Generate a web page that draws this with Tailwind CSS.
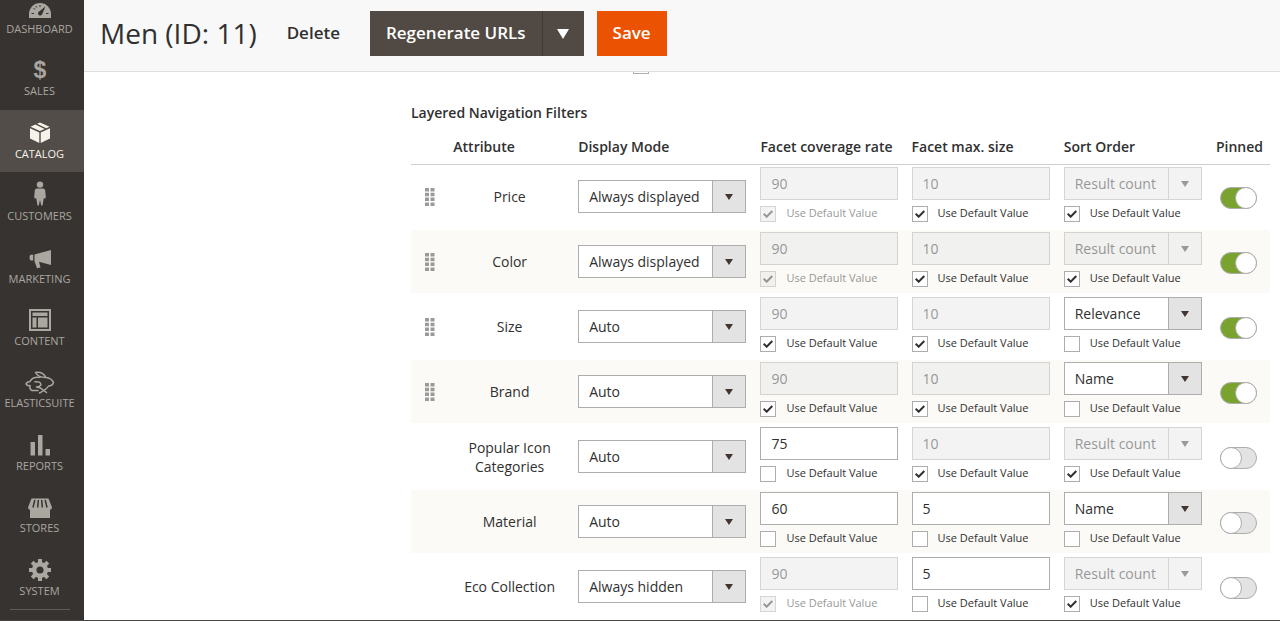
<!DOCTYPE html>
<html lang="en">
<head>
  <meta charset="UTF-8"/>
  <meta name="viewport" content="width=device-width, initial-scale=1"/>
  <title>Men (ID: 11) / Categories</title>
  <script src="https://cdn.jsdelivr.net/npm/@tailwindcss/browser@4"></script>
</head>
<body class="font-['Open_Sans',sans-serif] text-[#303030] bg-white">

<div class="flex h-screen overflow-hidden border-b border-[#4a4643]">

  <!-- Admin menu -->
  <nav class="w-[84px] shrink-0 bg-[#373330] text-[11px] text-[#aaa6a0] overflow-hidden">
    <ul class="-mt-[15px] h-[624px] grid grid-rows-10 text-center leading-[18px]">
      <li>
        <a href="#dashboard" class="flex flex-col items-center h-full pt-[9px] pr-[5px]">
          <svg class="w-7 h-[26px]" viewBox="0 0 28 26" fill="currentColor">
            <path d="M3 24v-4a11 11 0 0 1 22 0v4z"/>
            <path d="M5.500 19.500h2.500M7.500 14l1.500 1.500M14 11v2M9.800 12l.9 1.500M20 19.500h2.500" stroke="#373330" fill="none"/>
            <path d="M19.500 12.500l-3.500 8a2.200 2.200 0 0 1-3.800-2.200z" fill="#373330"/>
          </svg>
          <span>DASHBOARD</span>
        </a>
      </li>
      <li>
        <a href="#sales" class="flex flex-col items-center h-full pt-[9px] pr-[5px]">
          <svg class="w-7 h-[26px]" viewBox="0 0 28 26" fill="currentColor">
            <text x="14" y="22" text-anchor="middle" font-size="23" font-weight="700" font-family="Liberation Sans, sans-serif">$</text>
          </svg>
          <span>SALES</span>
        </a>
      </li>
      <li class="bg-[#524d49] text-[#f7f3eb]">
        <a href="#catalog" aria-current="page" class="flex flex-col items-center h-full pt-[9px] pr-[5px]">
          <svg class="w-7 h-[26px]" viewBox="0 0 28 26" fill="currentColor">
            <path d="M11 4.800L14 3.500l9.500 4.300-3.200 1.500zM9.300 5.600L4.500 7.800 14 12l4.700-2.100z"/>
            <path d="M4 9.200l9.300 4.200V24L4 19.500zM24 9.200l-9.300 4.200V24l9.300-4.500z"/>
          </svg>
          <span>CATALOG</span>
        </a>
      </li>
      <li>
        <a href="#customers" class="flex flex-col items-center h-full pt-[9px] pr-[5px]">
          <svg class="w-7 h-[26px]" viewBox="0 0 28 26" fill="currentColor">
            <circle cx="14" cy="3.600" r="3.200"/>
            <path d="M11 7.500h6q2 0 2.200 2l.6 6.500q0 1.500-1 1.500l-1-.5-1.300 7.500h-1.300L14 19l-1.200 5.500h-1.300L10.200 17l-1 .5q-1 0-1-1.500l.6-6.500q.2-2 2.200-2z"/>
          </svg>
          <span>CUSTOMERS</span>
        </a>
      </li>
      <li>
        <a href="#marketing" class="flex flex-col items-center h-full pt-[9px] pr-[5px]">
          <svg class="w-7 h-[26px]" viewBox="0 0 28 26" fill="currentColor">
            <path d="M8.500 10.500L25 6v15L13 17.700l1.500 5.800-3.500.8-2.500-7zM7.200 10.700v5.800H4.500Q3.500 15 3.500 13.500t1-2.800z"/>
          </svg>
          <span>MARKETING</span>
        </a>
      </li>
      <li>
        <a href="#content" class="flex flex-col items-center h-full pt-[9px] pr-[5px]">
          <svg class="w-7 h-[26px]" viewBox="0 0 28 26" fill="currentColor">
            <path d="M3 3h22v22H3zM5 5v18h18V5z" fill-rule="evenodd"/>
            <path d="M6.500 6.500h15v3.500h-15zM6.500 11.500h4v10h-4zM12 11.500h9.500v10H12z"/>
          </svg>
          <span>CONTENT</span>
        </a>
      </li>
      <li>
        <a href="#elasticsuite" class="flex flex-col items-center h-full pt-[9px] pr-[5px]">
          <svg class="w-7 h-[26px] overflow-visible" viewBox="0 0 28 26" fill="none" stroke="currentColor" stroke-width="1.500" stroke-linecap="round" stroke-linejoin="round">
            <path d="M20 9.500Q17 3.500 9.500 4.500 12 9.500 20 9.500q5.500.5 7.500 5-1 3.300-5 3.500-2 3.500-9 7"/>
            <path d="M14 9.300Q6 8.500 4 13.500q-3.500.5-4 2.500 1.500 2.300 4 1.500-.5 4 2 5h6M9 13.800q5.500-.8 6 3.200-1.500 1.800-4.500 2 4 .2 6 2.500l4 3"/>
          </svg>
          <span>ELASTICSUITE</span>
        </a>
      </li>
      <li>
        <a href="#reports" class="flex flex-col items-center h-full pt-[9px] pr-[5px]">
          <svg class="w-7 h-[26px]" viewBox="0 0 28 26" fill="currentColor">
            <path d="M4.500 11H9v13.500H4.500zM12 4h4.500v20.500H12zM19.500 18H24v6.500h-4.500z"/>
          </svg>
          <span>REPORTS</span>
        </a>
      </li>
      <li>
        <a href="#stores" class="flex flex-col items-center h-full pt-[9px] pr-[5px]">
          <svg class="w-7 h-[26px]" viewBox="0 0 28 26" fill="currentColor">
            <path d="M5.500 5.500h17l3.500 9q0 2-2 2.300V25H4v-8.200q-2-.3-2-2.300z"/>
            <path d="M8.800 7L7 14.500M12.300 7l-.6 7.500M15.700 7l.6 7.500M19.200 7l1.800 7.500" stroke="#373330" stroke-width="1.500" fill="none"/>
          </svg>
          <span>STORES</span>
        </a>
      </li>
      <li>
        <a href="#system" class="flex flex-col items-center h-full pt-[9px] pr-[5px]">
          <svg class="w-7 h-[26px]" viewBox="0 0 28 26" fill="none" stroke="currentColor">
            <circle cx="14" cy="14" r="5.800" stroke-width="4.500"/>
            <path d="M14 3v4M14 21v4M3 14h4M21 14h4M6.200 6.200L9 9M19 19l2.800 2.800M6.200 21.800L9 19M19 9l2.800-2.800" stroke-width="4"/>
          </svg>
          <span>SYSTEM</span>
        </a>
      </li>
    </ul>
    <hr class="ml-[10px] mr-[14px] border-[#5f5a55]"/>
  </nav>

  <div class="flex-1 min-w-0">

    <!-- Page actions -->
    <header class="relative z-10 flex items-center bg-[#f8f8f8] border-b border-[#dedede] pt-[11px] pb-[15px] pl-4">
      <h1 class="text-[28px] leading-[45px]">Men (ID: 11)</h1>
      <button type="button" class="ml-[30px] pb-[2px] text-[17px] font-semibold">Delete</button>
      <div class="ml-[30px] flex h-[45px] bg-[#514943] text-white">
        <button type="button" class="px-4 pb-[2px] text-[17px] font-semibold">Regenerate URLs</button>
        <button type="button" aria-label="More actions" class="w-[42px] flex items-center justify-center border-l border-[#413a35]">
          <svg class="w-3 h-[10px]" viewBox="0 0 12 10" fill="currentColor"><path d="M0 0h12L6 10z"/></svg>
        </button>
      </div>
      <button type="button" class="ml-[13px] h-[45px] px-4 pb-[2px] bg-[#eb5202] text-white text-[17px] font-semibold">Save</button>
    </header>

    <main class="pl-[327px] pr-[10px]">
      <input type="checkbox" aria-label="Use all" class="block appearance-none w-4 h-4 -mt-[14px] ml-[222px] border border-[#adadad]"/>

      <h2 class="mt-7 text-sm leading-[22px] font-semibold">Layered Navigation Filters</h2>

      <table class="mt-[5px] w-full table-fixed border-separate border-spacing-0 text-sm">
        <colgroup>
          <col class="w-[37px]"/>
          <col class="w-[123px]"/>
          <col class="w-[182px]"/>
          <col class="w-[151px]"/>
          <col class="w-[152px]"/>
          <col class="w-[152px]"/>
          <col class="w-[61px]"/>
        </colgroup>
        <thead>
          <tr class="h-9 text-left whitespace-nowrap">
            <th colspan="2" class="pr-[14px] font-semibold text-center border-b border-[#cfcfcf]">Attribute</th>
            <th class="px-[7px] font-semibold border-b border-[#cfcfcf]">Display Mode</th>
            <th class="px-[7px] font-semibold border-b border-[#cfcfcf]">Facet coverage rate</th>
            <th class="px-[7px] font-semibold border-b border-[#cfcfcf]">Facet max. size</th>
            <th class="px-[7px] font-semibold border-b border-[#cfcfcf]">Sort Order</th>
            <th class="pl-[7px] font-semibold border-b border-[#cfcfcf]">Pinned</th>
          </tr>
        </thead>
        <tbody id="filters"></tbody>
      </table>
    </main>
  </div>
</div>

<script>
  // rate / size / sort: [value, use default, field locked]
  const filters = [
    { name: 'Price', mode: 'Always displayed', rate: ['90', true, true], size: ['10', true], sort: ['Result count', true], pinned: true },
    { name: 'Color', mode: 'Always displayed', rate: ['90', true, true], size: ['10', true], sort: ['Result count', true], pinned: true },
    { name: 'Size', mode: 'Auto', rate: ['90', true], size: ['10', true], sort: ['Relevance', false], pinned: true },
    { name: 'Brand', mode: 'Auto', rate: ['90', true], size: ['10', true], sort: ['Name', false], pinned: true },
    { name: 'Popular Icon Categories', mode: 'Auto', rate: ['75', false], size: ['10', true], sort: ['Result count', true], pinned: false },
    { name: 'Material', mode: 'Auto', rate: ['60', false], size: ['5', false], sort: ['Name', false], pinned: false },
    { name: 'Eco Collection', mode: 'Always hidden', rate: ['90', true, true], size: ['5', false], sort: ['Result count', true], pinned: false }
  ]
  const modes = ['Auto', 'Always displayed', 'Always hidden']
  const sorts = ['Result count', 'Relevance', 'Name']

  const handle = `
    <svg class="ml-[14px] w-[10px] h-[18px]" viewBox="0 0 10 18" fill="#9a9a9a">
      <path d="M0 0h4v3.500H0zM5.500 0h4v3.500h-4zM0 4.800h4v3.500H0zM5.500 4.800h4v3.500h-4zM0 9.600h4v3.500H0zM5.500 9.600h4v3.500h-4zM0 14.400h4v3.500H0zM5.500 14.400h4v3.500h-4z"/>
    </svg>`

  function select(options, value, label, disabled) {
    return `
      <div class="relative ${disabled ? 'opacity-50' : ''}">
        <select aria-label="${label}" ${disabled ? 'disabled' : ''}
          class="block appearance-none w-full h-[33px] pl-[10px] pr-[34px] border border-[#adadad] text-sm opacity-100 ${disabled ? 'bg-[#e9e9e9]' : 'bg-white'}">
          ${options.map(o => `<option ${o === value ? 'selected' : ''}>${o}</option>`).join('')}
        </select>
        <span class="absolute right-0 top-0 w-[34px] h-[33px] flex items-center justify-center border border-[#adadad] pointer-events-none ${disabled ? 'bg-[#e9e9e9]' : 'bg-[#e3e3e3]'}">
          <svg class="w-2 h-[6px]" viewBox="0 0 8 6" fill="#41362f"><path d="M0 0h8L4 6z"/></svg>
        </span>
      </div>`
  }

  function textbox(value, label, disabled) {
    return `<input type="text" value="${value}" aria-label="${label}" ${disabled ? 'disabled' : ''}
      class="block w-full h-[33px] px-[10px] border border-[#adadad] bg-white text-sm disabled:bg-[#e9e9e9] disabled:opacity-50"/>`
  }

  function useDefault(checked, locked) {
    return `
      <label class="relative mt-[6px] flex items-center h-4 text-[11px] whitespace-nowrap ${locked ? 'opacity-50' : ''}">
        <input type="checkbox" ${checked ? 'checked' : ''} ${locked ? 'disabled' : ''}
          class="peer appearance-none shrink-0 w-4 h-4 mr-[10px] border border-[#adadad] bg-white disabled:bg-[#e9e9e9]"/>
        <svg class="absolute left-[3px] top-1 w-[10px] h-2 hidden peer-checked:block" viewBox="0 0 10 8" fill="none" stroke="#303030" stroke-width="2"><path d="M.7 3.700l3 3L9.300 1"/></svg>
        <span class="pb-[2px]">Use Default Value</span>
      </label>`
  }

  document.getElementById('filters').innerHTML = filters.map((f, i) => `
    <tr class="even:bg-[#fbfaf6]">
      <td class="border-b-2 border-white">${i < 4 ? handle : ''}</td>
      <td class="px-3 border-b-2 border-white text-center leading-[19px]">${f.name}</td>
      <td class="px-[7px] border-b-2 border-white">${select(modes, f.mode, f.name + ' display mode', false)}</td>
      <td class="px-[7px] pt-[2px] pb-[6px] border-b-2 border-white">${textbox(f.rate[0], f.name + ' coverage rate', f.rate[1])}${useDefault(f.rate[1], f.rate[2])}</td>
      <td class="px-[7px] pt-[2px] pb-[6px] border-b-2 border-white">${textbox(f.size[0], f.name + ' max size', f.size[1])}${useDefault(f.size[1], false)}</td>
      <td class="px-[7px] pt-[2px] pb-[6px] border-b-2 border-white">${select(sorts, f.sort[0], f.name + ' sort order', f.sort[1])}${useDefault(f.sort[1], false)}</td>
      <td class="pt-[2px] pl-[11px] border-b-2 border-white">
        <input type="checkbox" role="switch" aria-label="${f.name} pinned" ${f.pinned ? 'checked' : ''}
          class="flex appearance-none w-[37px] h-[22px] rounded-full border border-[#adadad] bg-[#e3e3e3] checked:bg-[#79a22e] checked:justify-end before:block before:w-[22px] before:h-[22px] before:-m-px before:rounded-full before:border before:border-[#adadad] before:bg-white"/>
      </td>
    </tr>`).join('')
</script>

</body>
</html>
